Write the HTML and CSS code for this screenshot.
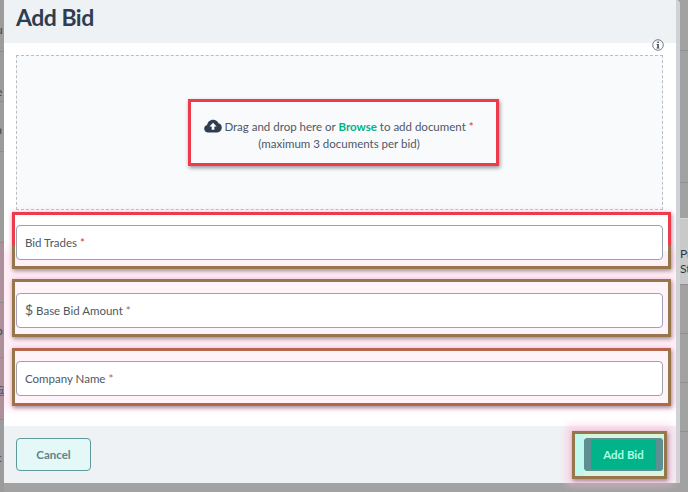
FILE: index.html
```html
<!DOCTYPE html>
<html lang="en">
<head>
<meta charset="utf-8">
<title>Add Bid</title>
<link rel="stylesheet" href="styles.css">
</head>
<body>
<div class="page">
  <div class="backdrop backdrop-left">
    <div class="bl bl-1">u</div>
    <div class="bl bl-2">e</div>
    <div class="bl bl-3">a</div>
    <div class="bl bl-4">-</div>
    <div class="bl bl-5">c</div>
    <div class="bl bl-6">o</div>
    <div class="bl bl-7">@</div>
    <div class="bl bl-8">c</div>
  </div>
  <main class="modal">
    <header class="modal-header"><h1 class="title">Add Bid</h1></header>
    <section class="modal-body">
      <div class="info-row">
        <svg class="info" viewBox="0 0 12 12" width="12" height="12" aria-hidden="true">
          <circle cx="6" cy="6" r="5.3" fill="none" stroke="#55606c" stroke-width="0.8"/>
          <rect x="5.3" y="5" width="1.5" height="4" fill="#3a4450"/>
          <rect x="4.5" y="8.7" width="3" height="0.8" fill="#3a4450"/>
          <rect x="4.6" y="5" width="1.5" height="0.8" fill="#3a4450"/>
          <rect x="5.3" y="2.6" width="1.5" height="1.4" fill="#3a4450"/>
        </svg>
      </div>
      <div class="dropzone">
        <div class="drop-mark">
          <p class="drop-line">
            <svg class="cloud" viewBox="0 0 18 14" width="18" height="14" aria-hidden="true">
              <path fill="#2e3e52" d="M4.2 13.4C1.900 13.400.2 11.800.2 9.700c0-1.800 1.200-3.200 2.900-3.600C3.500 3 6 .7 9.100.7c2.500 0 4.500 1.400 5.400 3.500 2 .4 3.400 2.300 3.300 4.500-.1 2.600-2 4.700-4.500 4.700z"/>
              <path fill="#fff" d="M9 3.800l3.600 3.800h-2.200v3.200H7.700V7.600H5.500z"/>
            </svg>
            <span>Drag and drop here or <a class="browse">Browse</a> to add document <span class="req">*</span></span>
          </p>
          <p class="drop-line">(maximum 3 documents per bid)</p>
        </div>
      </div>
      <div class="mark mark-a"><div class="field">Bid Trades <span class="req">*</span></div></div>
      <div class="mark mark-b"><div class="field"><span class="dollar">$</span> Base Bid Amount <span class="req req-muted">*</span></div></div>
      <div class="mark mark-c"><div class="field">Company Name <span class="req req-muted">*</span></div></div>
    </section>
    <footer class="modal-footer">
      <button class="btn-cancel" type="button">Cancel</button>
      <div class="submit-mark"><button class="btn-submit" type="button">Add Bid</button></div>
    </footer>
  </main>
  <div class="backdrop backdrop-right">
    <div class="br br-1"></div>
    <div class="br br-2"></div>
    <div class="br br-5"></div>
    <div class="br br-3"><span>Pr</span><span>St</span></div>
    <div class="br br-4"></div>
    <div class="br br-4"></div>
    <div class="br br-4"></div>
  </div>
</div>
</body>
</html>
```
FILE: styles.css
```css
* { box-sizing: border-box; }
html, body { margin: 0; padding: 0; }
body { background: #a2a2a2; font-family: "Lato", "Open Sans", sans-serif; color: #4d5864; overflow: hidden; }
.page { display: flex; width: 688px; height: 492px; align-items: flex-start; }

.backdrop { height: 492px; overflow: hidden; flex: none; }
.backdrop-left { width: 4px; background: #9c9c9c; font-size: 12px; line-height: 16px; color: #3f4650; }
.bl { border-bottom: 1px solid #8d8d8d; text-indent: -4px; white-space: nowrap; }
.bl-1 { height: 52px; padding-top: 22px; }
.bl-2 { height: 50px; padding-top: 32px; }
.bl-3 { height: 50px; padding-top: 20px; }
.bl-4 { height: 91px; padding-top: 40px; }
.bl-5 { height: 58px; padding-top: 59px; background: #ae8f9c; overflow: hidden; }
.bl-6 { height: 55px; padding-top: 20px; background: #ae8f9c; }
.bl-7 { height: 62px; padding-top: 24px; background: #ae8f9c; }
.bl-8 { height: 74px; padding-top: 30px; }

.modal { width: 676px; height: 483px; flex: none; background: #fff; display: flex; flex-direction: column; border-right: 4px solid #cfd3d8; border-top-right-radius: 4px; }
.modal-header { height: 43px; background: #eff2f5; padding: 0 12px; flex: none; }
.title { margin: 0; font-size: 23px; line-height: 35px; font-weight: 700; color: #2e3e52; letter-spacing: -0.5px; }
.modal-body { flex: 1; background: linear-gradient(#fff 0, #fff 200px, #ffeff7 212px, #ffeff7 360px, #fff 372px); }
.info-row { height: 12px; display: flex; justify-content: flex-end; padding-right: 12px; }
.info { display: block; margin-top: -4px; }
.dropzone { margin-left: 12px; width: 647px; height: 155px; background: #f9fafc; border: 1px dashed #b9bec4; display: flex; align-items: center; justify-content: center; }
.drop-mark { width: 311px; height: 67px; margin-left: 8px; padding: 4px 9px 0 0; border: 3px solid #ee3b4b; box-shadow: 1px 2px 4px rgba(0,0,0,.4); display: flex; flex-direction: column; align-items: center; justify-content: center; font-size: 11.5px; line-height: 17px; }
.drop-line { margin: 0; display: flex; align-items: center; gap: 2px; white-space: pre-wrap; }
.cloud { display: block; flex: none; }
.browse { color: #00b388; font-weight: 700; }
.req { color: #e0304a; }
.req-muted { color: #8b6f7d; }

.mark { width: 659px; margin-left: 8px; padding: 10px 5px 0 1px; border: 3px solid #96764a; box-shadow: 1px 2px 4px rgba(0,0,0,.35), 0 0 6px rgba(255,170,210,.55); background: #fff3fa; }
.mark-a { height: 57px; margin-top: 2px; background: linear-gradient(#fff 0, #fff 36px, #ffeff7 36px); border-image: linear-gradient(#ee3b4b 0, #ee3b4b 58%, #96764a 58%) 3; }
.mark-b { height: 58px; margin-top: 10px; padding-top: 11px; }
.mark-c { height: 58px; margin-top: 11px; border-top-color: #b5654a; border-bottom-color: #b5654a; border-left-color: #96764a; border-right-color: #96764a; }
.field { height: 35px; border: 1px solid #98a2ad; border-radius: 4px; background: #fff; padding: 0 8px; font-size: 11.5px; line-height: 33px; color: #4d5864; white-space: nowrap; }
.mark-b .field { border-color: #a49fb8; line-height: 31px; }
.mark-c .field { border-color: #a0a0ad; }
.dollar { font-size: 14px; }

.modal-footer { height: 57px; flex: none; background: #eff2f5; display: flex; align-items: flex-start; justify-content: space-between; padding: 12px 12px 0 12px; }
button { font-family: inherit; cursor: pointer; }
.btn-cancel { width: 75px; height: 33px; background: #e5f8f8; border: 1px solid #5c9a9c; border-radius: 4px; color: #5b8389; font-size: 11.5px; font-weight: 700; padding: 0; }
.submit-mark { width: 95px; height: 48px; margin: -7px -3px 0 0; padding: 4px 1px 0 9px; border: 3px solid #96764a; background: linear-gradient(90deg, #bff8ec 0, #bff8ec 9px, #d8f5e0 9px); box-shadow: 1px 2px 4px rgba(0,0,0,.35), 0 0 8px 5px rgba(255,190,220,.7); }
.btn-submit { display: block; width: 79px; height: 33px; padding: 0; border: 0; border-radius: 4px; background: linear-gradient(90deg, #5e8f92 0, #5e8f92 7px, #00b388 7px, #00b388 72px, #5e8f92 72px); box-shadow: inset 0 2px 0 #5e8f92, inset 0 -2px 0 #5e8f92; color: #a8ffe6; font-size: 11.5px; font-weight: 700; }

.backdrop-right { width: 8px; color: #2e3640; font-size: 12px; line-height: 15px; }
.br { border-bottom: 1px solid #8f8f8f; }
.br-1 { height: 51px; }
.br-2 { height: 132px; }
.br-5 { height: 36px; border-bottom-color: #d8d8d8; }
.br-3 { height: 66px; background: #c9c9c9; padding-top: 27px; display: flex; flex-direction: column; overflow: hidden; }
.br-4 { height: 49px; }
```
